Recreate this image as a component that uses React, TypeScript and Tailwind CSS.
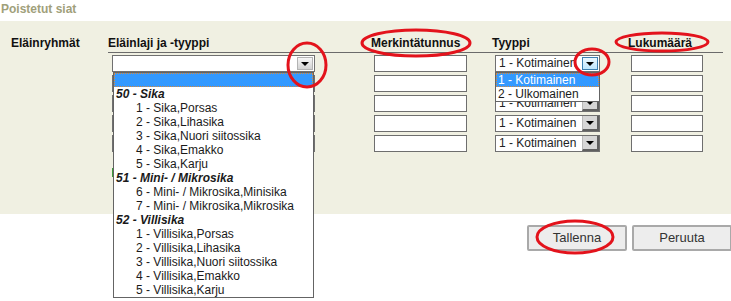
import React from 'react';

const groups = [
    { label: '50 - Sika', items: ['1 - Sika,Porsas', '2 - Sika,Lihasika', '3 - Sika,Nuori siitossika', '4 - Sika,Emakko', '5 - Sika,Karju'] },
    { label: '51 - Mini- / Mikrosika', items: ['6 - Mini- / Mikrosika,Minisika', '7 - Mini- / Mikrosika,Mikrosika'] },
    { label: '52 - Villisika', items: ['1 - Villisika,Porsas', '2 - Villisika,Lihasika', '3 - Villisika,Nuori siitossika', '4 - Villisika,Emakko', '5 - Villisika,Karju'] },
];

const Arrow = () => (
    <span className="w-0 h-0 border-x-[4px] border-x-transparent border-t-[4px] border-t-black" />
);

// windows-style combo box, button look depends on state
const Select: React.FC<{ value?: string; width: string; open?: boolean; children?: React.ReactNode }> = ({ value, width, open, children }) => {
    return (
        <div className={`relative ${width} h-[17px]`}>
            <div className="flex h-full bg-white border border-[#707070]">
                <div className="flex-1 pl-[3px] text-[#222] leading-[15px] overflow-hidden whitespace-nowrap">{value}</div>
                {open ? (
                    <div className="w-[16px] m-px flex items-center justify-center border border-[#3c7fb1] bg-gradient-to-b from-[#eaf6fd] to-[#bee6fd]">
                        <Arrow />
                    </div>
                ) : value ? (
                    <div className="w-[17px] flex items-center justify-center border-l border-[#b8b8b8] border-r-2 border-b-2 border-r-[#606060] border-b-[#606060] bg-[#d6d6d6]">
                        <Arrow />
                    </div>
                ) : (
                    <div className="w-[16px] m-px flex items-center justify-center border border-[#b3b3b3] bg-gradient-to-b from-[#f6f6f6] to-[#d2d2d2]">
                        <Arrow />
                    </div>
                )}
            </div>
            {children}
        </div>
    );
};

const TextInput: React.FC<{ width: string }> = ({ width }) => (
    <div className={`${width} h-[17px] bg-white border border-[#6e6e6e]`} />
);

const Highlight: React.FC<{ children?: React.ReactNode }> = ({ children }) => (
    <div className="h-[14px] bg-[#3399ff] text-white pl-[2px] outline outline-1 outline-dotted outline-[#d9893a] -outline-offset-1">{children}</div>
);

export default function App() {
    const rows = [0, 1, 2, 3, 4];
    return (
        <div className="relative w-[731px] h-[301px] overflow-hidden bg-white font-['Liberation_Sans',Arial,sans-serif] text-[12px] leading-[14px] text-[#111]">
            <div className="h-[21px] pl-px pt-[2px] font-bold text-[#a0a07a]">Poistetut siat</div>

            <div className="flex h-[193px] pt-[15px] bg-[#f0f0e2]">
                <div className="w-[108px] pl-[11px] font-bold">Eläinryhmät</div>
                <div className="w-[615px]">
                    <div className="flex h-[17px] border-b border-[#6b6b6b] font-bold">
                        <div className="w-[263px]">Eläinlaji ja -tyyppi</div>
                        <div className="w-[121px]">Merkintätunnus</div>
                        <div className="w-[136px]">Tyyppi</div>
                        <div className="w-[95px]">Lukumäärä</div>
                    </div>
                    <div className="pt-[2px]">
                        {rows.map((r) => (
                            <div key={r} className="flex h-[20px]">
                                <div className={`w-[263px] pl-[4px] ${r === 0 ? 'relative z-10' : ''}`}>
                                    <Select width="w-[203px]" open={false}>
                                        {r === 0 && (
                                            <div className="absolute left-px top-[17px] w-[201px] bg-white border border-[#646464] text-[#1a1a1a] whitespace-nowrap">
                                                <Highlight />
                                                {groups.map((g) => (
                                                    <React.Fragment key={g.label}>
                                                        <div className="h-[14px] pl-[2px] font-bold italic">{g.label}</div>
                                                        {g.items.map((it) => (
                                                            <div key={it} className="h-[14px] pl-[22px]">{it}</div>
                                                        ))}
                                                    </React.Fragment>
                                                ))}
                                            </div>
                                        )}
                                    </Select>
                                </div>
                                <div className="w-[121px] pl-[3px]">
                                    <TextInput width="w-[93px]" />
                                </div>
                                <div className={`w-[136px] pl-[3px] ${r === 0 ? 'relative z-10' : ''}`}>
                                    <Select width="w-[105px]" value="1 - Kotimainen" open={r === 0}>
                                        {r === 0 && (
                                            <div className="absolute left-0 top-[17px] w-[105px] bg-white border border-[#646464] text-[#1a1a1a] whitespace-nowrap">
                                                <Highlight>1 - Kotimainen</Highlight>
                                                <div className="h-[14px] pl-[2px]">2 - Ulkomainen</div>
                                            </div>
                                        )}
                                    </Select>
                                </div>
                                <div className="w-[95px] pl-[3px]">
                                    <TextInput width="w-[72px]" />
                                </div>
                            </div>
                        ))}
                        <div className="pl-[4px] pt-[13px]">
                            <div className="w-[10px] h-[9px] bg-[#3c9a3c]" />
                        </div>
                    </div>
                </div>
            </div>

            <div className="flex gap-[5px] pt-[11px] pl-[527px]">
                <button className="shrink-0 w-[100px] h-[26px] border-2 border-[#a9a9a9] rounded-[2px] bg-[#ededed] text-[13px] text-[#333]">Tallenna</button>
                <button className="shrink-0 w-[100px] h-[26px] border-2 border-[#a9a9a9] rounded-[2px] bg-[#ededed] text-[13px] text-[#333]">Peruuta</button>
            </div>

            {/* red annotation ellipses */}
            <svg className="absolute inset-0 z-20 pointer-events-none" width="731" height="301" viewBox="0 0 731 301">
                <g fill="none" stroke="#e3131c" strokeWidth="3">
                    <ellipse cx="307" cy="65" rx="19" ry="22" />
                    <ellipse cx="416" cy="43" rx="54" ry="13" />
                    <ellipse cx="592" cy="62" rx="17" ry="13" />
                    <ellipse cx="662" cy="42" rx="46" ry="9" />
                    <ellipse cx="575" cy="237" rx="38" ry="16" />
                </g>
            </svg>
        </div>
    );
}
